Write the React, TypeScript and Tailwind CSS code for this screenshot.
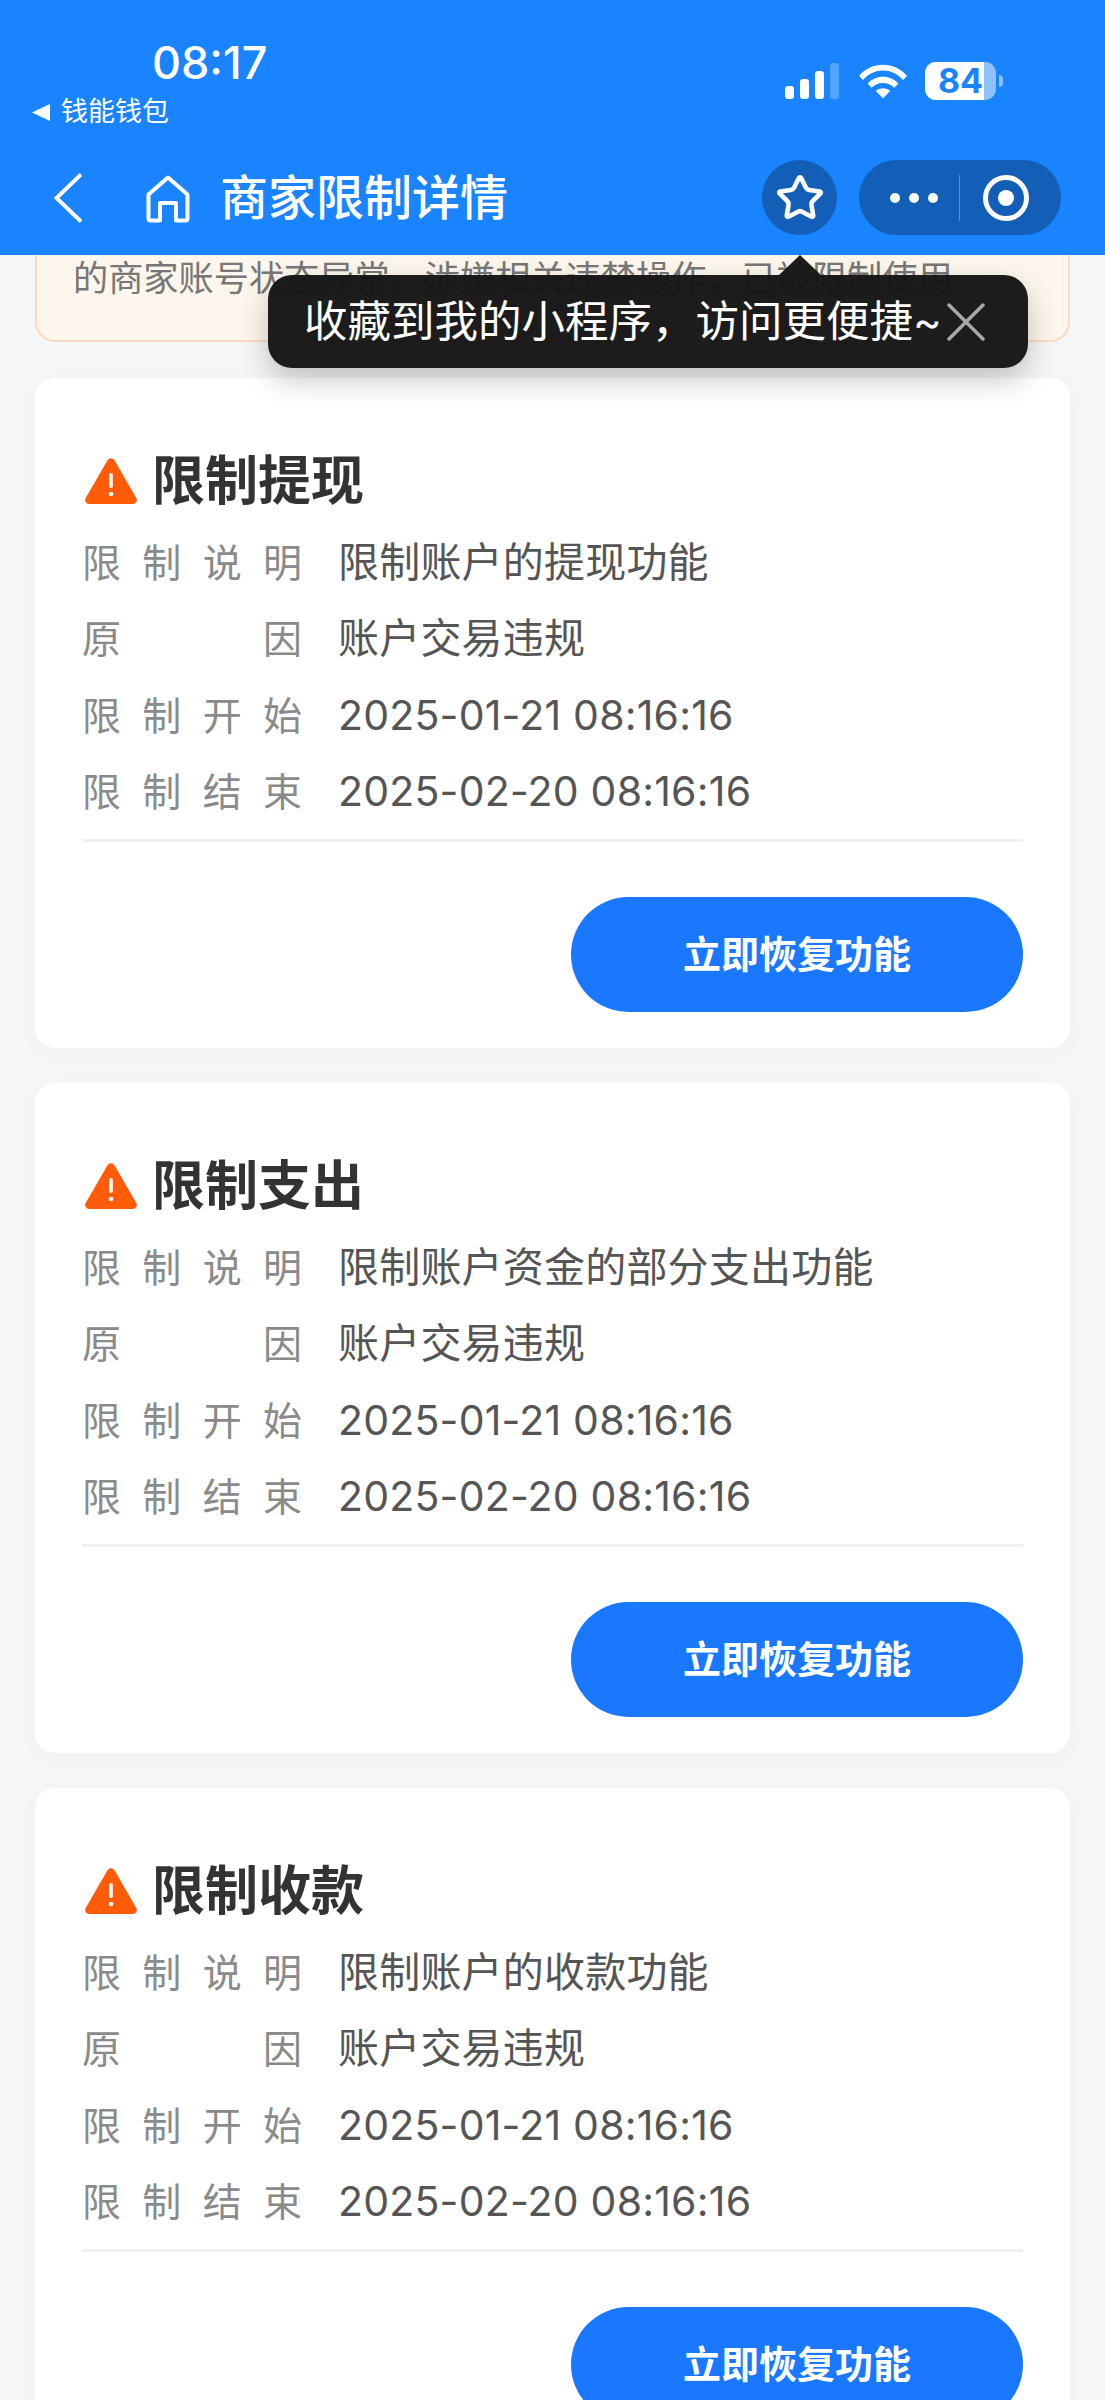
import { Star } from 'lucide-react';

const cards = [
    { title: '限制提现', desc: '限制账户的提现功能' },
    { title: '限制支出', desc: '限制账户资金的部分支出功能' },
    { title: '限制收款', desc: '限制账户的收款功能' },
];

function StatusIcons() {
    return (
        <div className="flex items-center self-start mt-[62px] mr-[102px]">
            {/* Signal */}
            <div className="flex items-end gap-[6px] h-[36px]">
                <div className="w-[9px] h-[13px] rounded-[3px] bg-white" />
                <div className="w-[9px] h-[20px] rounded-[3px] bg-white" />
                <div className="w-[9px] h-[28px] rounded-[3px] bg-white" />
                <div className="w-[9px] h-[36px] rounded-[3px] bg-white/25" />
            </div>
            {/* Wifi */}
            <svg width="48" height="36" viewBox="0 0 50 36" className="ml-[20px]" fill="white">
                <path d="M0 12.5C6.5 5 15.5 1 25 1s18.5 4 25 11.5l-4 4.5C40.500 10.500 33 7 25 7S9.500 10.500 4 17z" />
                <path d="M9 20.500C13.200 16 18.900 13.500 25 13.500s11.800 2.500 16 7l-4.200 4.500C33.700 21.700 29.500 20 25 20s-8.700 1.700-11.800 5z" />
                <path d="M17.500 28.500c2-2 4.700-3 7.500-3s5.500 1 7.500 3L25 36z" />
            </svg>
            {/* Battery */}
            <div className="relative ml-[18px] w-[71px] h-[38px] rounded-[11px] bg-white/50">
                <div className="h-full w-[59px] rounded-l-[11px] bg-white" />
                <span className="absolute inset-0 flex items-center justify-center text-[34px] leading-none font-bold text-[#1a84ff] [font-family:Inter,sans-serif]">
                    84
                </span>
            </div>
            <div className="ml-[3px] w-[4px] h-[12px] rounded-r-full bg-white/50" />
        </div>
    );
}

function Header() {
    return (
        <div className="relative z-10 h-[255px] bg-[#1a84ff] text-white">
            <div className="flex justify-between h-[160px]">
                <div className="pl-[32px] pt-[36px]">
                    <div className="ml-[120px] text-[45px] leading-[54px] font-medium [font-family:Inter,sans-serif]">08:17</div>
                    <div className="flex items-center mt-[6px] h-[32px]">
                        <svg width="18" height="17" viewBox="0 0 18 17" fill="white">
                            <path d="M0 8.500L18 0V17z" />
                        </svg>
                        <span className="ml-[11px] text-[27px] leading-[32px]">钱能钱包</span>
                    </div>
                </div>
                <StatusIcons />
            </div>

            {/* Nav bar */}
            <div className="flex items-center h-[75px] pl-[54px] pr-[44px]">
                <svg width="28" height="50" viewBox="0 0 28 50" fill="none" stroke="white" strokeWidth="4">
                    <path d="M27 1.500L2.500 25L27 48.500" />
                </svg>
                <svg width="44" height="48" viewBox="0 0 44 48" fill="none" stroke="white" strokeWidth="4" strokeLinejoin="round" className="ml-[64px] mt-[2px]">
                    <path d="M2.500 19.500L22 2.500L41.500 19.500V43.500a2 2 0 0 1-2 2H30V28H14V45.500H4.500a2 2 0 0 1-2-2Z" />
                </svg>
                <h1 className="ml-[30px] text-[48px] leading-none font-medium">商家限制详情</h1>
                <div className="ml-auto flex items-center justify-center w-[75px] h-[75px] rounded-full bg-[#135eb6]">
                    <Star size={50} strokeWidth={2.2} color="white" />
                </div>
                <div className="ml-[22px] flex items-center w-[202px] h-[75px] rounded-full bg-[#135eb6]">
                    <div className="flex items-center gap-[9px] ml-[31px] w-[69px]">
                        <div className="w-[10px] h-[10px] rounded-full bg-white" />
                        <div className="w-[10px] h-[10px] rounded-full bg-white" />
                        <div className="w-[10px] h-[10px] rounded-full bg-white" />
                    </div>
                    <div className="w-px h-[46px] bg-white/30" />
                    <div className="ml-[23px] flex items-center justify-center w-[46px] h-[46px] rounded-full border-[5px] border-white">
                        <div className="w-[16px] h-[16px] rounded-full bg-white" />
                    </div>
                </div>
            </div>
        </div>
    );
}

function Tooltip() {
    return (
        <div className="absolute z-20 left-[268px] top-[275px] flex items-center w-[760px] h-[93px] pl-[36px] rounded-[24px] bg-[#151515]/[0.97] text-white shadow-[0_12px_30px_rgba(0,0,0,0.22)]">
            <div className="absolute left-[511px] top-[-20px] w-0 h-0 border-x-[21px] border-x-transparent border-b-[20px] border-b-[#151515]/[0.97]" />
            <span className="text-[43.500px] leading-none whitespace-nowrap">收藏到我的小程序，访问更便捷~</span>
            <svg width="38" height="38" viewBox="0 0 38 38" stroke="#a8a8a8" strokeWidth="3.500" strokeLinecap="round" className="ml-[5px] shrink-0">
                <path d="M2 2L36 36M36 2L2 36" />
            </svg>
        </div>
    );
}

function Row({ label, value }: { label: string; value: string }) {
    return (
        <div className="flex items-center h-[76.500px]">
            <span className="w-[220px] shrink-0 text-[39px] leading-none text-[#8a8a8a] [text-align-last:justify]">{label}</span>
            <span className="ml-[36px] text-[41px] leading-none tracking-[0.2px] text-[#555555]">{value}</span>
        </div>
    );
}

function Card({ title, desc }: { title: string; desc: string }) {
    return (
        <div className="flex flex-col h-[670px] px-[47px] pt-[70px] rounded-[20px] bg-white shadow-[0_4px_24px_rgba(0,0,0,0.025)]">
            <div className="flex items-center h-[76px] -mt-[5px] mb-[3px]">
                <svg width="52" height="46" viewBox="0 0 52 46" fill="#ff5c0a" className="ml-[3px] shrink-0">
                    <path d="M22.500 2.200a4 4 0 0 1 7 0L51.300 40a4 4 0 0 1-3.500 6H4.200a4 4 0 0 1-3.500-6Z" />
                    <rect x="24.200" y="15" width="3.600" height="15" rx="1.800" fill="white" />
                    <circle cx="26" cy="36" r="2.300" fill="white" />
                </svg>
                <h2 className="ml-[15px] text-[53px] leading-none font-bold text-[#333333]">{title}</h2>
            </div>
            <div className="mt-[2px]">
                <Row label="限制说明" value={desc} />
                <Row label="原因" value="账户交易违规" />
                <Row label="限制开始" value="2025-01-21 08:16:16" />
                <Row label="限制结束" value="2025-02-20 08:16:16" />
            </div>
            <div className="mt-[9px] h-[3px] bg-[#f0f0f0]" />
            <div className="flex justify-end mt-[55px]">
                <button className="w-[452px] h-[115px] rounded-full bg-[#1a78ff] text-[38px] font-bold text-white">立即恢复功能</button>
            </div>
        </div>
    );
}

export default function App() {
    return (
        <div className="relative h-[2400px] overflow-hidden bg-[#f5f6f8] [font-family:Inter,'Noto_Sans_CJK_SC',sans-serif]">
            <Header />
            <Tooltip />
            <div className="px-[35px]">
                {/* Notice, scrolled under the header */}
                <div className="h-[87px] pl-[36px] pt-[3px] rounded-b-[20px] border-x-2 border-b-2 border-[#fdd9c0] bg-[#fdf6ec]">
                    <p className="text-[35.200px] leading-[40px] whitespace-nowrap text-[#777777]">的商家账号状态异常，涉嫌相关违禁操作，已被限制使用</p>
                </div>
                <div className="flex flex-col gap-[35px] mt-[36px]">
                    {cards.map((c) => (
                        <Card key={c.title} title={c.title} desc={c.desc} />
                    ))}
                </div>
            </div>
        </div>
    );
}
